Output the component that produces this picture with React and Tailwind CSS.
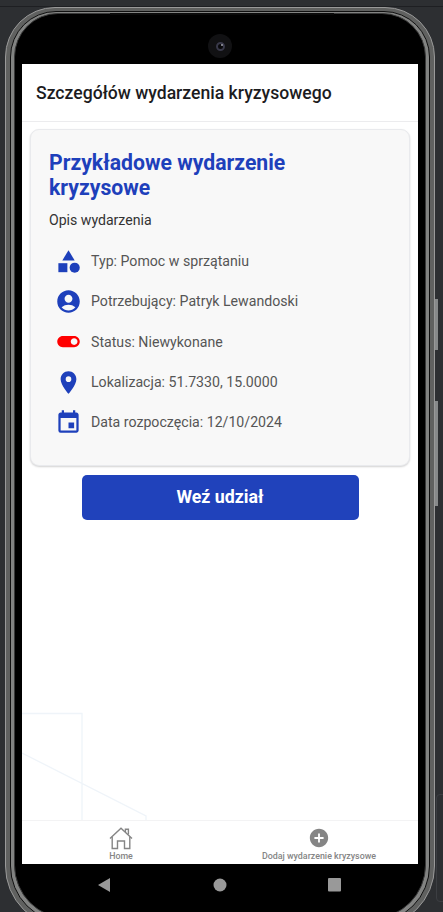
import React from "react";
import {
  MdCategory,
  MdAccountCircle,
  MdToggleOn,
  MdLocationOn,
  MdEvent,
  MdAddCircle,
} from "react-icons/md";

const details = [
  { icon: MdCategory, text: "Typ: Pomoc w sprzątaniu", tone: "text-[#1e40bb]" },
  { icon: MdAccountCircle, text: "Potrzebujący: Patryk Lewandoski", tone: "text-[#1e40bb]" },
  { icon: MdToggleOn, text: "Status: Niewykonane", tone: "text-[#ff0000]" },
  { icon: MdLocationOn, text: "Lokalizacja: 51.7330, 15.0000", tone: "text-[#1e40bb]" },
  { icon: MdEvent, text: "Data rozpoczęcia: 12/10/2024", tone: "text-[#1e40bb]" },
];

function HomeIcon() {
  return (
    <svg width="24" height="23" viewBox="0 0 24 23" fill="none" stroke="#858585" strokeWidth="1.4">
      <path d="M1 11.5 12 1.2 23 11.5" />
      <path d="M3.2 10V21.5H8.5V14H15.5V21.5H20.8V10" />
      <path d="M16.4 5V2.2H19.4V7.6" />
    </svg>
  );
}

function DetailCard() {
  return (
    <section className="mx-2 h-[337px] rounded-[9px] border border-[#e9eaed] bg-[#f8f8f8] pl-[18px] pt-[20px] shadow-[0_1px_2px_rgba(0,0,0,0.18)]">
      <h2 className="w-[300px] text-[21.2px] font-bold leading-[25.3px] text-[#1e40bb]">
        Przykładowe wydarzenie kryzysowe
      </h2>
      <p className="mt-[9px] text-[14.1px] leading-5 text-[#333]">Opis wydarzenia</p>
      <ul className="mt-[12px]">
        {details.map(({ icon: Icon, text, tone }) => (
          <li key={text} className="flex h-[40.3px] items-center pl-[6px]">
            <Icon className={`mb-px size-[27px] shrink-0 ${tone}`} />
            <span className="ml-[9px] text-[14.15px] text-[#555]">{text}</span>
          </li>
        ))}
      </ul>
    </section>
  );
}

function Screen() {
  return (
    <div className="flex h-[800px] w-[396px] flex-col bg-white">
      <header className="flex h-[58px] shrink-0 items-center border-b border-[#ececee] pl-[14px] pt-[2px]">
        <h1 className="text-[17.6px] font-medium text-[#1c1c1e]">Szczegółów wydarzenia kryzysowego</h1>
      </header>
      <main className="relative flex-1 pt-[7px]">
        <svg className="absolute bottom-0 left-0" width="140" height="110" fill="none" stroke="#eff4f9" strokeWidth="1.3">
          <path d="M0 3.5H60V110M0 43 124 106v4" />
        </svg>
        <DetailCard />
        <button className="ml-[59.5px] mt-[9px] block h-[45px] w-[277px] rounded-[5px] bg-[#2042bb] text-[17.8px] font-bold text-white">
          Weź udział
        </button>
      </main>
      <nav className="grid h-[44px] shrink-0 grid-cols-2 border-t border-[#f3f3f4] text-[#858585]">
        <div className="flex flex-col items-center pt-[6px]">
          <HomeIcon />
          <span className="text-[8.8px] font-medium leading-[13px]">Home</span>
        </div>
        <div className="flex flex-col items-center pt-[6px]">
          <MdAddCircle className="size-[22px]" />
          <span className="mt-px whitespace-nowrap text-[8.9px] font-medium leading-[13px]">
            Dodaj wydarzenie kryzysowe
          </span>
        </div>
      </nav>
    </div>
  );
}

function SystemBar() {
  return (
    <div className="flex h-[42px] items-center justify-center gap-[95px]" aria-label="System navigation">
      <svg width="20" height="18" fill="#999"><path d="M3 9 15 2v14z" /></svg>
      <svg width="20" height="18" fill="#999"><circle cx="10" cy="9" r="6.5" /></svg>
      <svg width="20" height="18" fill="#999"><rect x="3" y="2" width="13" height="13.5" rx="1" /></svg>
    </div>
  );
}

export default function App() {
  return (
    <div
      className="relative h-[912px] w-[443px] overflow-hidden bg-[#2d2f32] pl-[5px] pt-[7px]"
      style={{ fontFamily: 'Roboto, "Noto Sans", sans-serif' }}
    >
      <div className="absolute left-0 top-0 h-[7px] w-full border-b border-[#1e1f22]" />
      <div className="absolute left-[434px] top-[299px] h-[51px] w-[4px] bg-[#87898a]" />
      <div className="absolute left-[434px] top-[401px] h-[105px] w-[4px] bg-[#87898a]" />
      <div className="absolute left-[436px] top-[794px] h-[108px] w-[12px] rounded border border-[#3c3e42]" />
      <div className="relative h-[921px] w-[430px] rounded-t-[50px] rounded-b-[62px] border border-[#999] bg-[#606160] p-[4px] pt-[3px]">
        <div className="h-full rounded-t-[46px] rounded-b-[57px] border border-[#101010] bg-[#828382] p-[3px] pt-px">
          <div className="h-full rounded-t-[44px] rounded-b-[54px] border border-[#3a3a3a] bg-black pt-[50px]">
            <div className="mx-[7px]">
              <Screen />
              <SystemBar />
            </div>
          </div>
        </div>
      </div>
      <div className="absolute left-[110px] top-[13px] h-[2px] w-[224px] bg-[#0a0a0a]" />
      <div className="absolute left-[208px] top-[34px] flex size-[24px] items-center justify-center rounded-full bg-[#111113]">
        <div className="size-[9px] rounded-full border-2 border-[#39394a] bg-[#08080a]">
          <div className="ml-[3px] size-[2px] rounded-full bg-[#a0a0ac]" />
        </div>
      </div>
    </div>
  );
}
